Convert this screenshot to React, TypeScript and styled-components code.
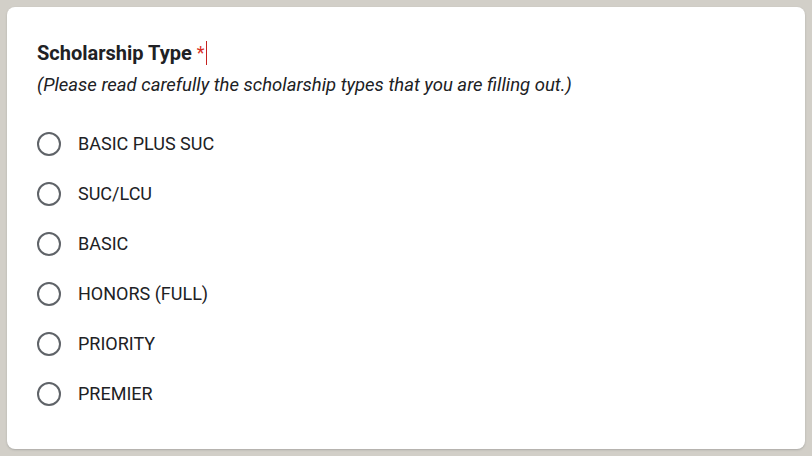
import React from "react";
import styled, { createGlobalStyle } from "styled-components";

const Global = createGlobalStyle`
  html, body { margin: 0; padding: 0; background: #d2cfc8; }
  body { font-family: Roboto, "Noto Sans", Arial, sans-serif; color: #202124; }
`;

const Page = styled.div`
  padding: 7px;
  box-sizing: border-box;
  width: 812px;
  height: 456px;
`;

const Card = styled.section`
  background: #ffffff;
  border-radius: 8px;
  box-shadow: 0 1px 2px rgba(60, 64, 67, 0.25);
  width: 798px;
  height: 442px;
  box-sizing: border-box;
  padding: 34px 30px 30px 30px;
  display: flex;
  flex-direction: column;
`;

const Title = styled.h2`
  margin: 0;
  font-size: 20px;
  line-height: 24px;
  font-weight: 700;
  letter-spacing: 0;
  color: #202124;
  display: flex;
  align-items: center;
`;

const Star = styled.span`
  color: #d93025;
  font-weight: 400;
  font-size: 18px;
  margin-left: 5px;
`;

const Caret = styled.span`
  display: inline-block;
  width: 1px;
  height: 24px;
  background: #c5221f;
  margin-left: 1px;
`;

const Hint = styled.p`
  margin: 8px 0 0 0;
  font-size: 18.5px;
  line-height: 24px;
  font-style: italic;
  color: #202124;
`;

const Options = styled.div`
  margin-top: 22px;
  display: flex;
  flex-direction: column;
`;

const Row = styled.label`
  display: flex;
  align-items: center;
  height: 50px;
  gap: 17px;
  cursor: pointer;
`;

const Radio = styled.span`
  width: 24px;
  height: 24px;
  box-sizing: border-box;
  border: 2px solid #5f6368;
  border-radius: 50%;
  flex: none;
`;

const OptionText = styled.span`
  font-size: 18px;
  line-height: 24px;
  color: #202124;
`;

const options = ["BASIC PLUS SUC", "SUC/LCU", "BASIC", "HONORS (FULL)", "PRIORITY", "PREMIER"];

export default function App() {
  return (
    <>
      <Global />
      <Page>
        <Card>
          <Title>
            Scholarship Type<Star>*</Star>
            <Caret />
          </Title>
          <Hint>(Please read carefully the scholarship types that you are filling out.)</Hint>
          <Options>
            {options.map((o) => (
              <Row key={o}>
                <Radio />
                <OptionText>{o}</OptionText>
              </Row>
            ))}
          </Options>
        </Card>
      </Page>
    </>
  );
}
